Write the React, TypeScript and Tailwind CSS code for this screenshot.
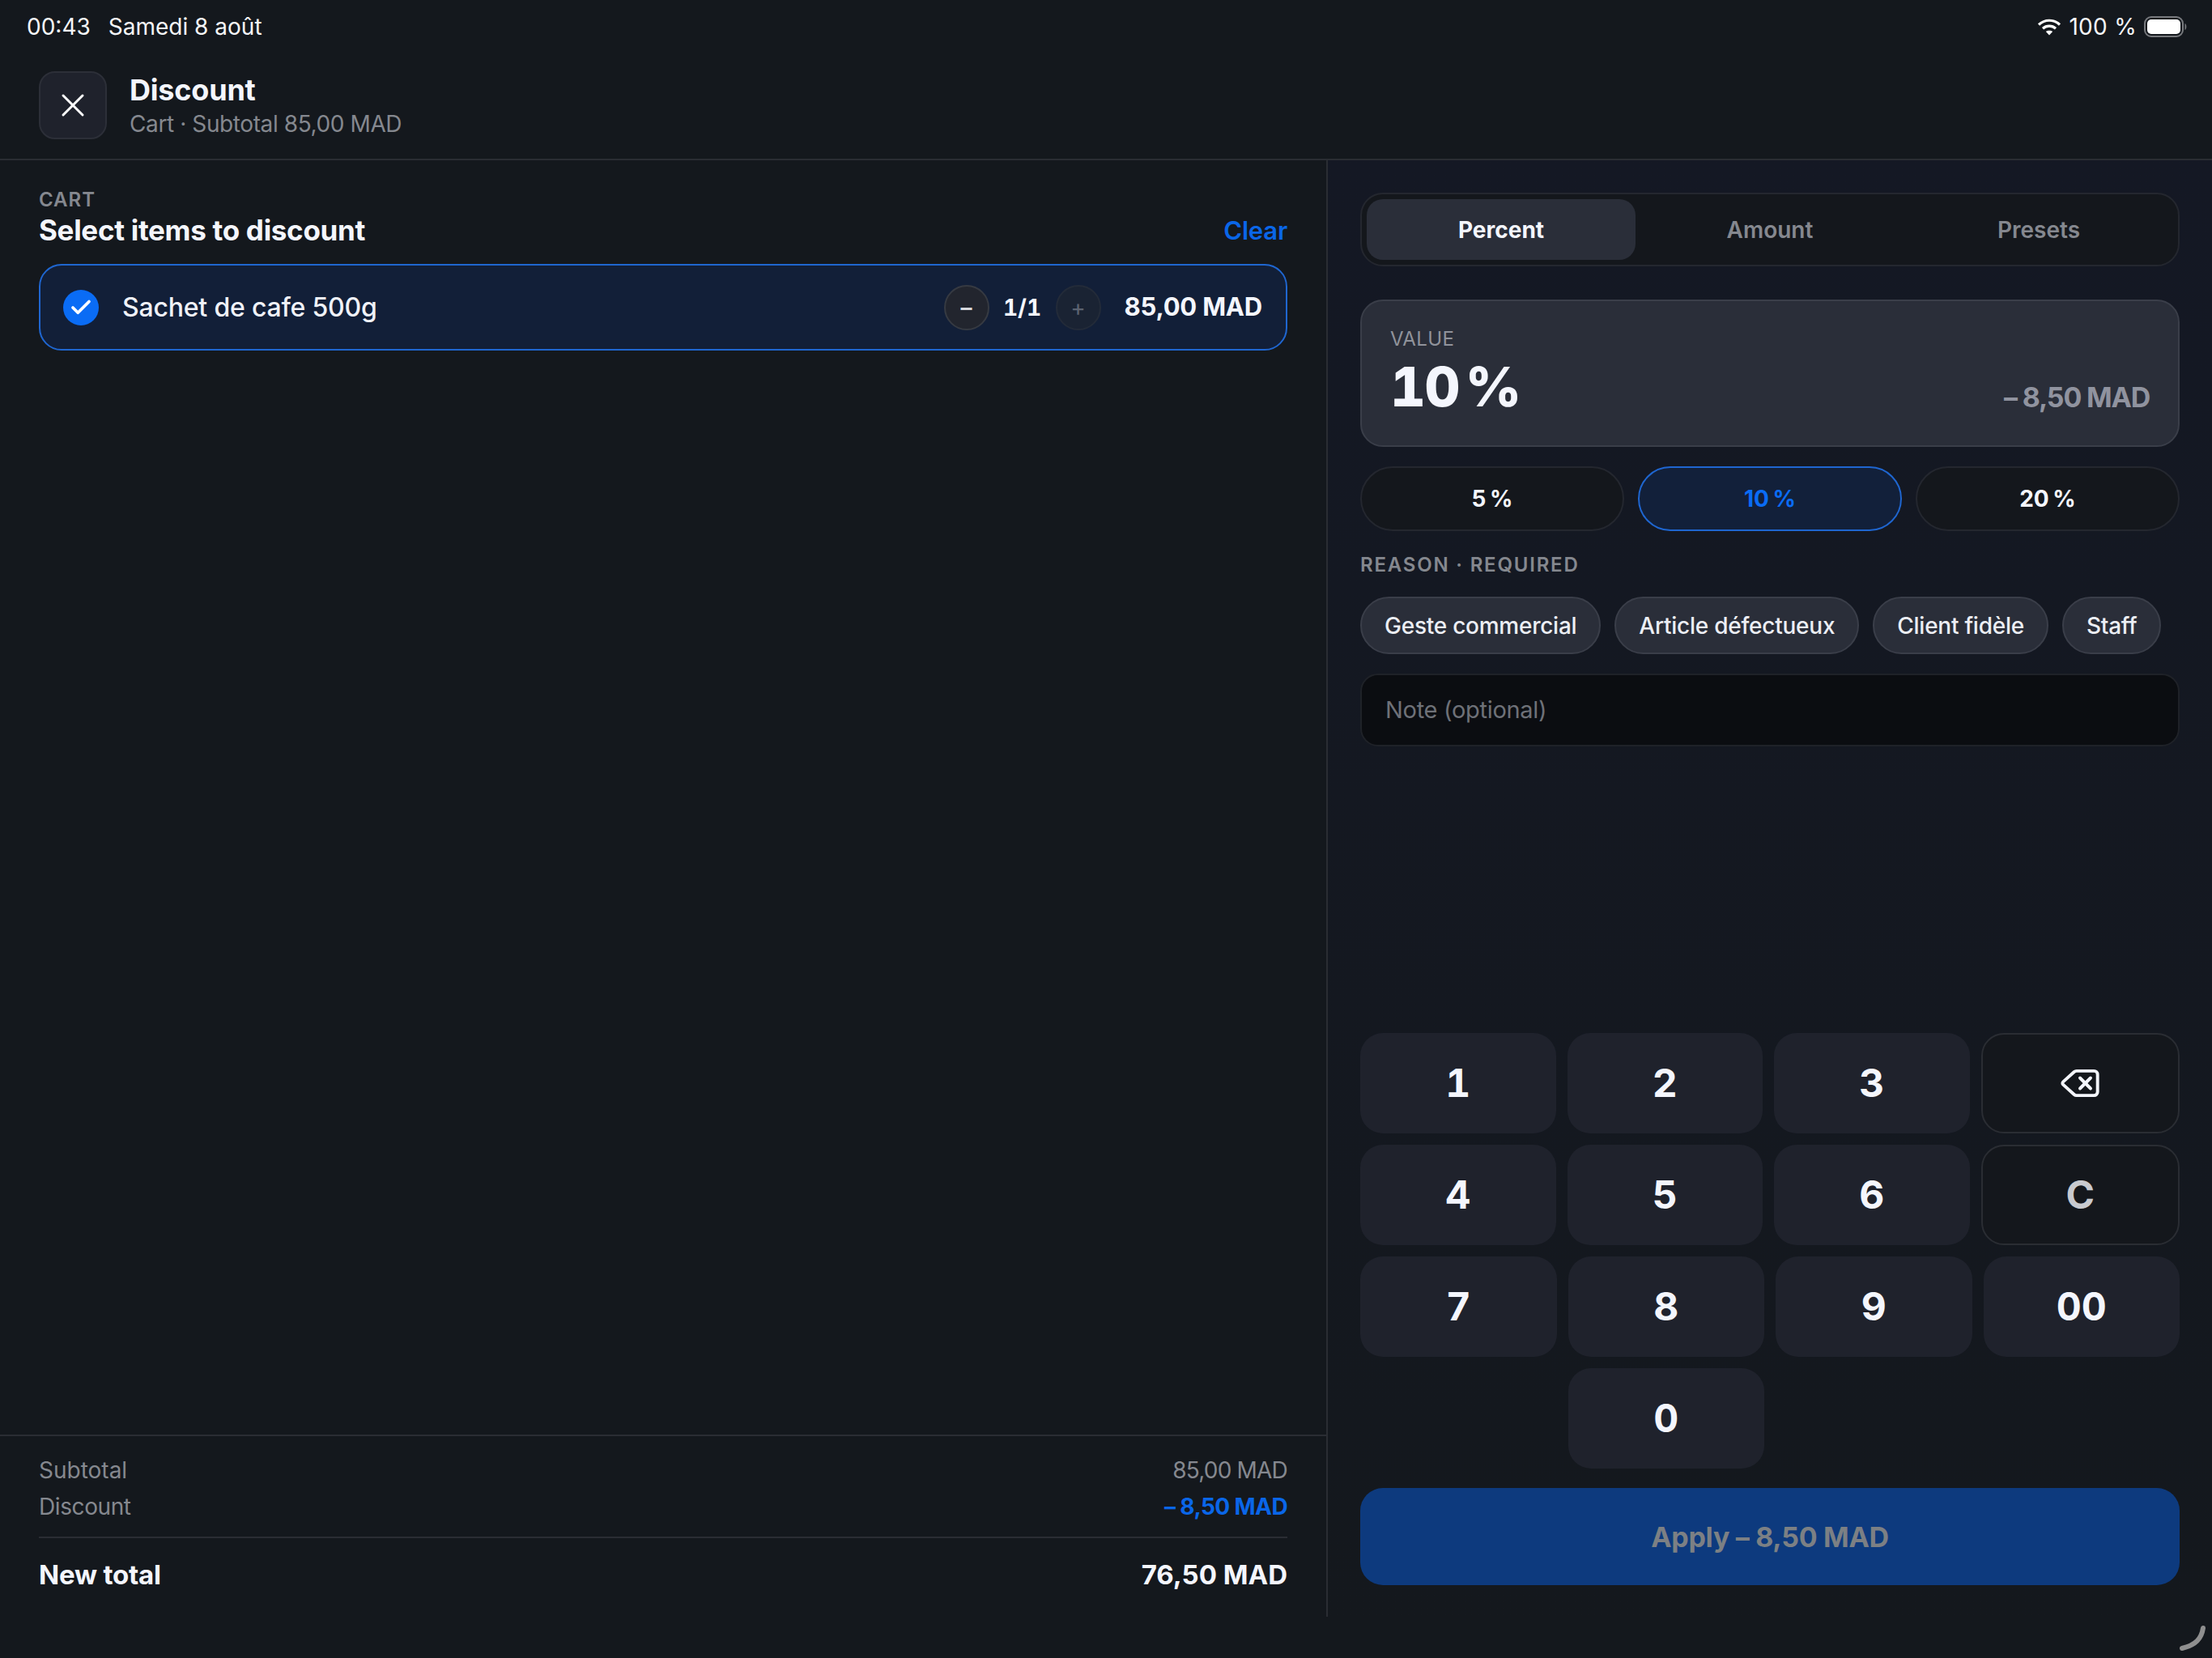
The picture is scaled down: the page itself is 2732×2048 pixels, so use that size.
import type { ReactNode } from 'react'
import { Check, Delete, X } from 'lucide-react'

const reasons = ['Geste commercial', 'Article défectueux', 'Client fidèle', 'Staff']

function Key({ label }: { label: string }) {
  return (
    <button className="flex-1 h-[124px] rounded-[28px] bg-[#1f222c] text-[48px] font-bold text-[#f4f6fd] tabular-nums flex items-center justify-center">
      {label}
    </button>
  )
}

function AltKey({ children }: { children: ReactNode }) {
  return (
    <button className="flex-1 h-[124px] rounded-[28px] border-2 border-[#2a2d33] bg-[#14171c] flex items-center justify-center">
      {children}
    </button>
  )
}

function StatusBar() {
  return (
    <div className="h-[66px] flex items-center justify-between pl-[33px] pr-[30px] text-[28px] text-[#f5f6f8]">
      <div className="flex gap-[22px]">
        <span>00:43</span>
        <span>Samedi 8 août</span>
      </div>
      <div className="flex items-center gap-[9px]">
        <svg width="30" height="22" viewBox="0 0 30 22" fill="none" stroke="#fff" strokeWidth="3.2">
          <path d="M2 8.5C9.5 1.5 20.5 1.5 28 8.5" />
          <path d="M7 13.2C11.5 9.2 18.5 9.2 23 13.2" />
          <path d="M15 21.5 L10.8 17 C13 15.2 17 15.2 19.2 17 Z" fill="#fff" stroke="none" />
        </svg>
        <span className="tracking-[0.3px]">100 %</span>
        <svg width="54" height="26" viewBox="0 0 54 26">
          <rect x="1" y="1" width="47" height="24" rx="8" fill="none" stroke="#77797d" strokeWidth="2" />
          <rect x="4" y="4" width="41" height="18" rx="5" fill="#fff" />
          <path d="M50.5 9 C53 10 53 16 50.5 17 Z" fill="#77797d" />
        </svg>
      </div>
    </div>
  )
}

function Header() {
  return (
    <div className="h-[132px] flex items-start gap-[28px] pl-[48px] pt-[22px] border-b-2 border-[#2a2d33]">
      <button className="w-[84px] h-[84px] rounded-[20px] bg-[#1f222c] border-2 border-[#2c2f38] flex items-center justify-center text-white">
        <X size={48} strokeWidth={1.5} />
      </button>
      <div>
        <div className="text-[36px] leading-[46px] font-bold tracking-[-0.2px] text-[#f4f6fd]">Discount</div>
        <div className="mt-[1px] text-[28px] leading-[36px] tracking-[-0.4px] text-[#85888f]">Cart · Subtotal 85,00 MAD</div>
      </div>
    </div>
  )
}

function CartPanel() {
  return (
    <div className="w-[1640px] shrink-0 flex flex-col border-r-2 border-[#2a2d33]">
      <div className="flex-1 px-[48px] pt-[33px]">
        <div className="flex items-end justify-between">
          <div>
            <div className="text-[24px] leading-[32px] font-semibold tracking-[1px] text-[#85888f]">CART</div>
            <div className="text-[35px] leading-[42px] font-bold tracking-[-0.3px] text-[#f4f6fd]">Select items to discount</div>
          </div>
          <button className="text-[31px] leading-[40px] font-semibold tracking-[-0.2px] text-[#0a66e8]">Clear</button>
        </div>
        <div className="mt-[21px] h-[107px] rounded-[28px] border-2 border-[#1f66d0] bg-[#121f38] flex items-center pl-[28px] pr-[29px]">
          <div className="w-[44px] h-[44px] rounded-full bg-[#0a6cf5] flex items-center justify-center text-white">
            <Check size={30} strokeWidth={3} />
          </div>
          <div className="ml-[29px] flex-1 text-[32px] font-medium tracking-[-0.2px] text-[#f0f2f8]">Sachet de cafe 500g</div>
          <div className="flex items-center gap-[17px]">
            <button className="w-[56px] h-[56px] rounded-full bg-[#22252e] border-2 border-[#363a42] text-[28px] font-semibold text-[#d5d7dc] flex items-center justify-center">–</button>
            <span className="w-[48px] text-center text-[28px] font-bold text-[#f4f6fd] tabular-nums">1/1</span>
            <button className="w-[56px] h-[56px] rounded-full bg-[#1a2333] border-2 border-[#232b39] text-[28px] text-[#5b6270] flex items-center justify-center">+</button>
          </div>
          <div className="ml-[29px] text-[31px] font-bold tracking-[-0.2px] text-[#f4f6fd]">85,00 MAD</div>
        </div>
      </div>
      <div className="h-[225px] border-t-2 border-[#2a2d33] px-[48px] pt-[24px]">
        <div className="flex justify-between text-[28px] leading-[36px] text-[#85888f]">
          <span>Subtotal</span>
          <span className="tracking-[-0.8px]">85,00 MAD</span>
        </div>
        <div className="mt-[9px] flex justify-between text-[28px] leading-[36px] text-[#85888f]">
          <span className="tracking-[-0.4px]">Discount</span>
          <span className="font-bold tracking-[-0.6px] text-[#0a66e8]">– 8,50 MAD</span>
        </div>
        <div className="mt-[19px] pt-[23px] border-t-2 border-[#2a2d33] flex justify-between text-[33px] leading-[44px] font-bold text-[#f4f6fd]">
          <span className="tracking-[-0.2px]">New total</span>
          <span>76,50 MAD</span>
        </div>
      </div>
    </div>
  )
}

function DiscountPanel() {
  return (
    <div className="flex-1 min-w-0 flex flex-col px-[40px] pt-[40px] pb-[39px] bg-linear-to-b from-[#141824] to-[#14181d]">
      <div className="h-[91px] rounded-[28px] border-2 border-[#24272f] bg-[#14171c] p-[6px] flex">
        <div className="flex-1 rounded-[20px] bg-[#2a2e39] flex items-center justify-center text-[28px] font-bold text-[#f4f6fd]">Percent</div>
        <div className="flex-1 flex items-center justify-center text-[28px] font-semibold text-[#85888f]">Amount</div>
        <div className="flex-1 flex items-center justify-center text-[28px] font-semibold text-[#85888f]">Presets</div>
      </div>

      <div className="mt-[41px] h-[182px] rounded-[28px] border-2 border-[#3a3e49] bg-[#2a2e39] px-[35px] pt-[32px] flex justify-between">
        <div>
          <div className="text-[24px] leading-[30px] tracking-[0.4px] text-[#90939b]">VALUE</div>
          <div className="mt-[2px] text-[68px] leading-[82px] font-extrabold tracking-[-1.5px] [word-spacing:-9px] text-[#f4f6fd] tabular-nums">10 %</div>
        </div>
        <div className="self-end mb-[37px] text-[34px] leading-[44px] font-bold tracking-[-1.2px] text-[#90939f]">– 8,50 MAD</div>
      </div>

      <div className="mt-[24px] flex gap-[17px]">
        <button className="flex-1 h-[80px] rounded-full border-2 border-[#24272f] bg-[#14171c] text-[28px] font-bold [word-spacing:-2px] text-[#f4f6fd]">5 %</button>
        <button className="flex-1 h-[80px] rounded-full border-2 border-[#1f66d0] bg-[#12203a] text-[28px] font-bold [word-spacing:-2px] text-[#0a6cf5]">10 %</button>
        <button className="flex-1 h-[80px] rounded-full border-2 border-[#24272f] bg-[#14171c] text-[28px] font-bold [word-spacing:-2px] text-[#f4f6fd]">20 %</button>
      </div>

      <div className="mt-[27px] text-[24px] leading-[30px] font-semibold tracking-[1.8px] text-[#85888f]">REASON · REQUIRED</div>

      <div className="mt-[24px] flex gap-[17px]">
        {reasons.map(r => (
          <button key={r} className="h-[71px] px-[28px] whitespace-nowrap rounded-full border-2 border-[#3a3e49] bg-[#2a2e39] text-[28px] font-medium tracking-[-0.25px] text-[#eceef4]">
            {r}
          </button>
        ))}
      </div>

      <div className="mt-[24px] h-[90px] rounded-[22px] border-2 border-[#1f2228] bg-[#0b0d11] flex items-center pl-[29px] text-[29px] tracking-[-0.3px] text-[#6e7178]">
        Note (optional)
      </div>

      <div className="mt-auto flex flex-col gap-[14px]">
        <div className="flex gap-[14px]">
          <Key label="1" />
          <Key label="2" />
          <Key label="3" />
          <AltKey>
            <Delete size={52} strokeWidth={1.8} className="text-[#f4f6fd]" />
          </AltKey>
        </div>
        <div className="flex gap-[14px]">
          <Key label="4" />
          <Key label="5" />
          <Key label="6" />
          <AltKey>
            <span className="text-[48px] font-bold text-[#c8cacf]">C</span>
          </AltKey>
        </div>
        <div className="flex gap-[14px]">
          <Key label="7" />
          <Key label="8" />
          <Key label="9" />
          <Key label="00" />
        </div>
        <div className="flex gap-[14px]">
          <div className="flex-1" />
          <Key label="0" />
          <div className="flex-1" />
          <div className="flex-1" />
        </div>
      </div>

      <button className="mt-[24px] h-[120px] rounded-[28px] bg-[#0d3a7e] text-[34px] font-bold tracking-[-0.3px] text-[#7c8084]">
        Apply – 8,50 MAD
      </button>
    </div>
  )
}

export default function App() {
  return (
    <div className="relative w-[2732px] h-[2048px] overflow-hidden bg-[#14181d] font-[family-name:Inter,sans-serif] flex flex-col">
      <StatusBar />
      <Header />
      <div className="h-[1799px] flex">
        <CartPanel />
        <DiscountPanel />
      </div>
      <svg className="absolute left-[2688px] top-[2005px]" width="40" height="38" viewBox="0 0 40 38" fill="none">
        <path d="M33 6 C31 19 24 27 7 31" stroke="#8f8f8f" strokeWidth="6" strokeLinecap="round" />
      </svg>
    </div>
  )
}
